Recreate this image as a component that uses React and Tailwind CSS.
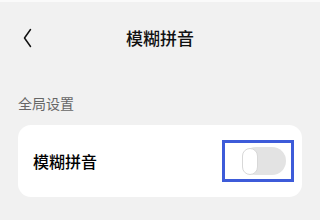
import React from 'react';

function App() {
  return (
    <div
      className="w-[320px] h-[220px] bg-[#f1f1f1] border-t-2 border-[#fafafa] overflow-hidden text-[#111]"
      style={{ fontFamily: '"Noto Sans CJK SC", "Noto Sans", sans-serif' }}
    >
      {/* Header */}
      <div className="relative flex items-center justify-center h-[74px] pb-[2px]">
        <svg className="absolute left-[22px] top-[26px] w-[11px] h-[20px]" viewBox="0 0 11 20" fill="none">
          <path d="M8.5 1.5 L2.5 10 L8.5 18.5" stroke="#111" strokeWidth="1.5" strokeLinecap="round" strokeLinejoin="round" />
        </svg>
        <h1 className="text-[17px] leading-none font-medium text-[#111] -mt-[2px]">模糊拼音</h1>
      </div>

      {/* Section */}
      <div className="px-[18px]">
        <p className="text-[14px] leading-none text-[#666] mt-[20px] mb-[15px]">全局设置</p>
        <div className="bg-white rounded-[13px] h-[72px] flex items-center justify-between pl-[15px] pr-[8px]">
          <span className="text-[16px] leading-none font-medium text-[#000] -mt-[1px]">模糊拼音</span>
          <div className="w-[72px] h-[42px] border-[3px] border-[#3d5bd9] flex items-center justify-end pr-[5px]">
            <div className="w-[44px] h-[28px] rounded-full bg-[#e3e3e3] flex items-center">
              <div className="w-[16px] h-[27px] rounded-full bg-white border-[1.5px] border-[#d8d8d8]"></div>
            </div>
          </div>
        </div>
      </div>
    </div>
  );
}

export default App;
